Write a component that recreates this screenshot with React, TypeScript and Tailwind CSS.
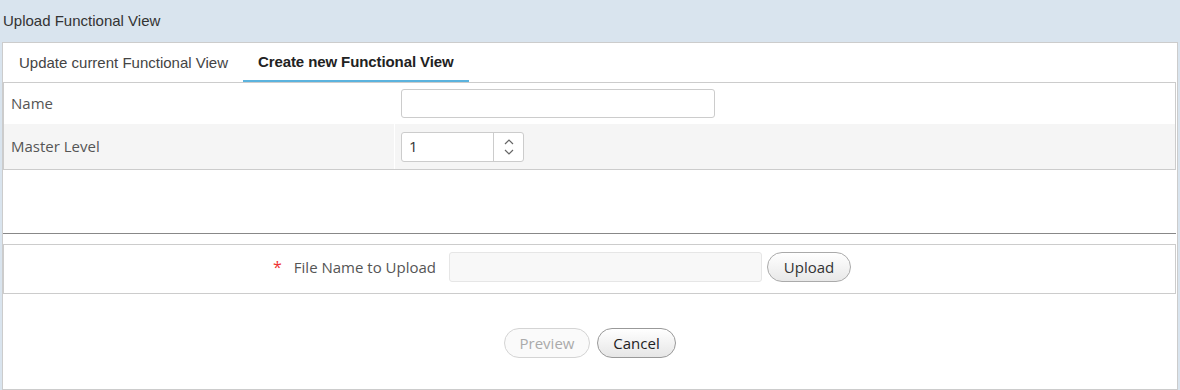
import React, { useState } from "react";

const openSans = "font-['Open_Sans',sans-serif]";

const Chevron = ({ up }: { up?: boolean }) => (
  <svg width="10" height="6" viewBox="0 0 10 6" className="text-[#666]">
    <path
      d={up ? "M1 5 L5 1 L9 5" : "M1 1 L5 5 L9 1"}
      fill="none"
      stroke="currentColor"
      strokeWidth="1.2"
    />
  </svg>
);

const App = () => {
  const [tab, setTab] = useState<"update" | "create">("create");
  const [level, setLevel] = useState(1);

  return (
    <div className="w-[1180px] h-[390px] bg-[#d9e4ee] font-['Liberation_Sans',Arial,sans-serif] text-[#333] flex flex-col overflow-hidden">
      {/* Header */}
      <div className="h-[42px] flex items-center px-[3px] text-[15px] text-[#333]">
        Upload Functional View
      </div>

      {/* Panel */}
      <div className="mx-[2px] h-[348px] bg-white border border-[#ccc] flex flex-col">
        {/* Tabs */}
        <div className="h-[39px] flex items-stretch text-[15px]">
          <button
            onClick={() => setTab("update")}
            className={`pl-4 pr-[15px] pt-[2px] ${
              tab === "update"
                ? "font-bold text-[#222] border-b-2 border-[#5bb3de]"
                : "text-[#444]"
            }`}
          >
            Update current Functional View
          </button>
          <button
            onClick={() => setTab("create")}
            className={`px-[15px] pt-[2px] tracking-[-0.1px] ${
              tab === "create"
                ? "font-bold text-[#222] border-b-2 border-[#5bb3de]"
                : "text-[#444]"
            }`}
          >
            Create new Functional View
          </button>
        </div>

        {/* Form table */}
        <div className={`mr-px border border-[#ccc] ${openSans} text-[15px] text-[#555]`}>
          <div className="h-[41px] flex">
            <div className="w-[391px] pl-[7px] flex items-center">Name</div>
            <div className="flex-1 pl-[6px] flex items-center">
              <input className="w-[314px] h-[29px] border border-[#ccc] rounded-[3px] px-2 outline-none" />
            </div>
          </div>
          <div className="h-[45px] flex bg-[#f5f5f5]">
            <div className="w-[391px] pl-[7px] flex items-center border-r border-white">
              Master Level
            </div>
            <div className="flex-1 pl-[6px] flex items-center">
              <div className="w-[123px] h-[30px] border border-[#ccc] rounded-[3px] bg-white flex">
                <input
                  value={level}
                  onChange={(e) => setLevel(Number(e.target.value) || 0)}
                  className="w-[91px] px-[7px] text-[15px] text-[#333] outline-none bg-transparent"
                />
                <div className="flex-1 border-l border-[#ccc] flex flex-col items-center justify-center gap-[4px]">
                  <button onClick={() => setLevel(level + 1)}>
                    <Chevron up />
                  </button>
                  <button onClick={() => setLevel(Math.max(0, level - 1))}>
                    <Chevron />
                  </button>
                </div>
              </div>
            </div>
          </div>
        </div>

        <div className="h-[63px]" />
        <div className="mr-px h-px bg-[#888]" />
        <div className="h-[10px]" />

        {/* Upload row */}
        <div className={`mr-px h-[50px] border border-[#ccc] flex items-start pt-[7px] ${openSans} text-[15px] text-[#555]`}>
          <div className="w-[432px] h-[30px] flex justify-end items-center gap-[12px]">
            <span className="text-[#e33] text-[16px] leading-none">*</span>
            <span>File Name to Upload</span>
          </div>
          <input
            disabled
            className="ml-[13px] w-[313px] h-[30px] bg-[#f8f8f8] border border-[#e6e6e6] rounded-[3px]"
          />
          <button className="ml-[5px] w-[84px] h-[30px] rounded-full border border-[#aaa] bg-gradient-to-b from-white to-[#e8e8e8] text-[#333]">
            Upload
          </button>
        </div>

        {/* Footer buttons */}
        <div className={`flex-1 flex justify-center pt-[34px] gap-[7px] ${openSans} text-[15px]`}>
          <button
            disabled
            className="w-[86px] h-[30px] rounded-full border border-[#d4d4d4] bg-[#fafafa] text-[#aaa]"
          >
            Preview
          </button>
          <button className="w-[79px] h-[30px] rounded-full border border-[#999] bg-gradient-to-b from-white to-[#e6e6e6] text-[#222]">
            Cancel
          </button>
        </div>
      </div>
    </div>
  );
};

export default App;
